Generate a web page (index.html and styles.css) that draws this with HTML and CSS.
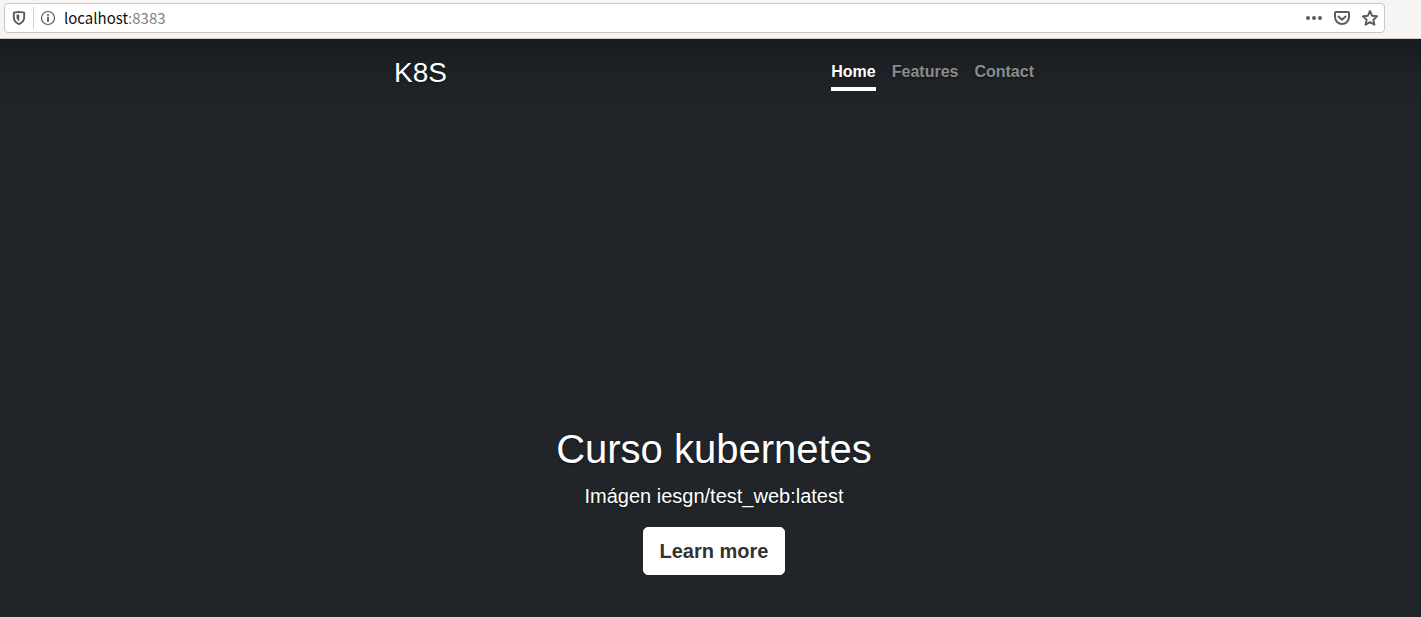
FILE: index.html
```html
<!DOCTYPE html>
<html lang="es">
<head>
<meta charset="utf-8">
<title>K8S</title>
<link rel="stylesheet" href="styles.css">
</head>
<body>
<div class="toolbar">
  <div class="urlbar">
    <button class="icon-button shield" type="button" aria-label="Tracking protection">
      <svg width="16" height="16" viewBox="0 0 16 16"><path d="M2.800 2.600 8 1.900l5.200.7v4.300c0 3.400-2 5.700-5.200 7.200-3.200-1.500-5.200-3.800-5.200-7.200z" fill="none" stroke="#5c5c5c" stroke-width="1.900" stroke-linejoin="round"/><path d="M8.200 4.300v7.200C6.500 10.300 5.500 8.800 5.500 6.800V4.700z" fill="#5c5c5c"/></svg>
    </button>
    <button class="icon-button info" type="button" aria-label="Site information">
      <svg width="16" height="16" viewBox="0 0 16 16"><circle cx="8" cy="8" r="6.500" fill="none" stroke="#5c5c5c" stroke-width="1.200"/><circle cx="8" cy="5" r="1" fill="#5c5c5c"/><path d="M8 7.300v4" stroke="#5c5c5c" stroke-width="1.800" stroke-linecap="round"/></svg>
    </button>
    <div class="address">
      <input class="host" type="text" value="localhost" aria-label="Host">
      <input class="port" type="text" value=":8383" aria-label="Port">
    </div>
    <div class="actions">
      <button class="icon-button" type="button" aria-label="Page actions">
        <svg width="18" height="18" viewBox="0 0 18 18" fill="#5c5c5c"><circle cx="3" cy="9" r="2"/><circle cx="9" cy="9" r="2"/><circle cx="15" cy="9" r="2"/></svg>
      </button>
      <button class="icon-button" type="button" aria-label="Save to Pocket">
        <svg width="18" height="18" viewBox="0 0 18 18" fill="none" stroke="#5c5c5c" stroke-width="2" stroke-linecap="round" stroke-linejoin="round"><path d="M3 3h12a1 1 0 0 1 1 1v4a7 7 0 0 1-14 0V4a1 1 0 0 1 1-1z"/><path d="m5.500 7.500 3.500 3.300 3.500-3.300"/></svg>
      </button>
      <button class="icon-button" type="button" aria-label="Bookmark this page">
        <svg width="18" height="18" viewBox="0 0 18 18" fill="none" stroke="#5c5c5c" stroke-width="1.900" stroke-linejoin="round"><path d="m9 2 2.100 4.700 5 .6-3.700 3.400 1 5L9 13.200l-4.400 2.500 1-5-3.700-3.400 5-.6z"/></svg>
      </button>
    </div>
  </div>
</div>
<div class="page">
  <div class="cover">
    <header class="masthead">
      <h3 class="brand">K8S</h3>
      <nav class="nav">
        <a class="nav-link active" href="#" aria-current="page">Home</a>
        <a class="nav-link" href="#">Features</a>
        <a class="nav-link" href="#">Contact</a>
      </nav>
    </header>
    <main class="content">
      <h1 class="heading">Curso kubernetes</h1>
      <p class="lead">Imágen iesgn/test_web:latest</p>
      <a class="button" href="#">Learn more</a>
    </main>
  </div>
</div>
</body>
</html>
```
FILE: styles.css
```css
* {
  box-sizing: border-box;
}

body {
  display: flex;
  flex-direction: column;
  min-height: 100vh;
  margin: 0;
  color: #fff;
  font: 16px/24px "Liberation Sans", Arial, sans-serif;
}

.toolbar {
  padding: 3px 36px 5px 4px;
  background: #f6f5f3;
  border-bottom: 1px solid #d2cdc8;
}

.urlbar {
  display: flex;
  align-items: center;
  height: 30px;
  padding-right: 5px;
  background: #fff;
  border: 1px solid #cdc7c2;
  border-radius: 4px;
}

.icon-button {
  display: flex;
  align-items: center;
  justify-content: center;
  padding: 0;
  background: none;
  border: 0;
}

.shield {
  width: 29px;
  height: 22px;
  border-right: 1px solid #cfcfcf;
}

.info {
  width: 28px;
}

.address {
  display: flex;
  flex: 1;
  padding-left: 2px;
}

.address input {
  height: 24px;
  padding: 0;
  background: none;
  border: 0;
  outline: 0;
  font: 15px/24px "Noto Sans CJK SC", "Noto Sans", sans-serif;
}

.host {
  field-sizing: content;
  color: #111;
}

.port {
  flex: 1;
  color: #808080;
}

.actions {
  display: flex;
  gap: 10px;
}

.page {
  position: relative;
  display: flex;
  flex: 1;
  overflow: hidden;
  padding-left: 7px;
  background: #212529;
  text-shadow: 0 1px 2px rgba(0, 0, 0, 0.5);
}

/* Shade along the top edge only */
.page::before {
  position: absolute;
  inset: 0 -160px -160px;
  box-shadow: inset 0 0 80px rgba(0, 0, 0, 0.5);
  content: "";
  pointer-events: none;
}

.cover {
  position: relative;
  display: flex;
  flex-direction: column;
  width: 100%;
  max-width: 672px;
  margin: 0 auto;
  padding: 16px 16px 42px;
}

.masthead {
  display: flex;
  justify-content: space-between;
  align-items: flex-start;
}

.brand {
  margin: 0;
  font-size: 28px;
  font-weight: 400;
  line-height: 36px;
}

.nav {
  display: flex;
  gap: 16px;
}

.nav-link {
  padding: 5px 0 3px;
  border-bottom: 4px solid transparent;
  color: rgba(255, 255, 255, 0.5);
  font-weight: 700;
  text-decoration: none;
}

.nav-link.active {
  border-color: #fff;
  color: #fff;
}

.content {
  margin-top: auto;
  text-align: center;
}

.heading {
  margin: 0 0 8px;
  font-size: 40px;
  font-weight: 400;
  line-height: 48px;
}

.lead {
  margin: 0 0 16px;
  font-size: 20px;
  line-height: 30px;
}

.button {
  display: block;
  width: fit-content;
  margin: 0 auto;
  padding: 8px 16px;
  border: 1px solid #fff;
  border-radius: 5px;
  background: #fff;
  color: #333;
  font-size: 20px;
  font-weight: 700;
  line-height: 30px;
  text-decoration: none;
  text-shadow: none;
}
```
